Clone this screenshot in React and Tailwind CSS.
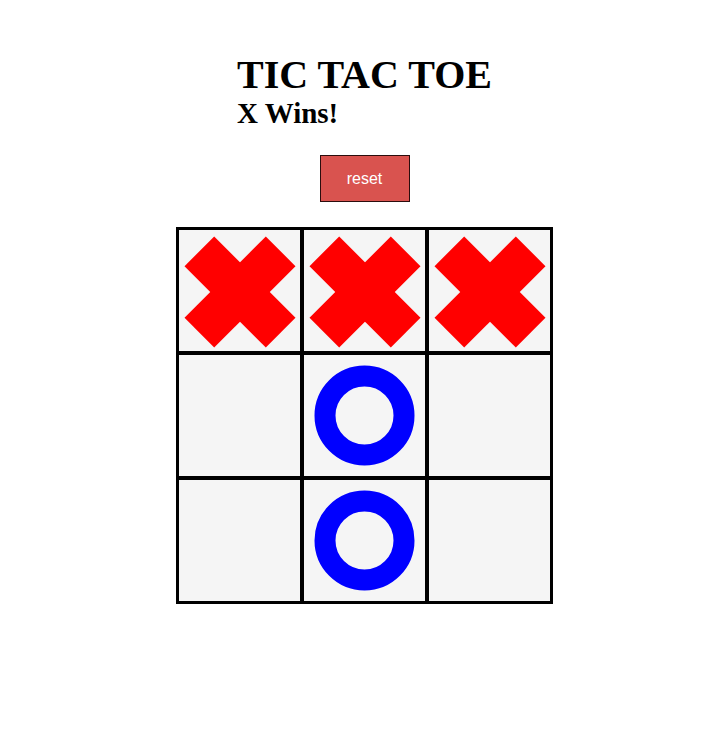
import React from "react";

const X = () => (
  <svg width="121" height="121" viewBox="0 0 121 121" className="block">
    <g transform="translate(61 62) rotate(45)">
      <rect x="-57.5" y="-21" width="115" height="42" fill="#ff0000" />
      <rect x="-21" y="-57.5" width="42" height="115" fill="#ff0000" />
    </g>
  </svg>
);

const O = () => (
  <svg width="121" height="121" viewBox="0 0 121 121" className="block">
    <circle cx="60.5" cy="60.5" r="39.5" fill="none" stroke="#0000ff" strokeWidth="21" />
  </svg>
);

const board = ["X", "X", "X", "", "O", "", "", "O", ""];

export default function App() {
  return (
    <div className="w-[705px] h-[742px] bg-white" style={{ fontFamily: '"Liberation Serif", serif' }}>
      <div className="ml-[176px] w-[377px] pt-[52px] flex flex-col">
        <div className="ml-[61px]">
          <h1 className="text-[40px] leading-[45px] font-bold text-black">TIC TAC TOE</h1>
          <h2 className="text-[29px] leading-[32px] font-bold text-black">X Wins!</h2>
        </div>
        <div className="flex justify-center mt-[26px]">
          <button
            className="w-[90px] h-[47px] bg-[#d9534f] border border-[#2b0d0d] text-white text-[16px]"
            style={{ fontFamily: '"Liberation Sans", Arial, sans-serif' }}
          >
            reset
          </button>
        </div>
        <div className="mt-[25px] border border-black grid grid-cols-3 w-[377px]">
          {board.map((v, i) => (
            <div key={i} className="w-[125px] h-[125px] border-2 border-black bg-[#f5f5f5]">
              {v === "X" ? <X /> : v === "O" ? <O /> : null}
            </div>
          ))}
        </div>
      </div>
    </div>
  );
}
